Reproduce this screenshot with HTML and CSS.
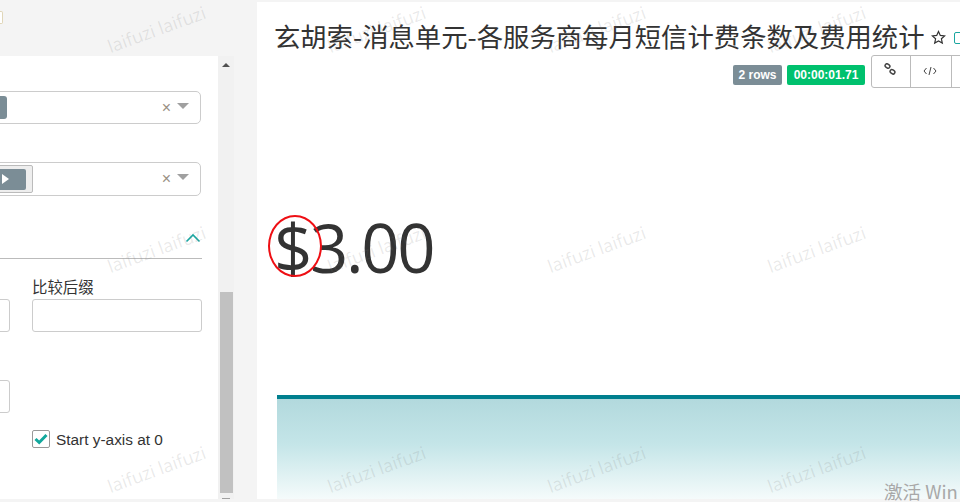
FILE: index.html
```html
<!DOCTYPE html>
<html lang="zh">
<head>
<meta charset="utf-8">
<title>玄胡索-消息单元</title>
<link rel="stylesheet" href="styles.css">
</head>
<body>
<div class="page">
  <aside class="side">
    <div class="side-top"><span class="tiny-box"></span></div>
    <div class="side-body">
      <div class="panel">
        <div class="select select-one">
          <span class="pill"></span>
          <span class="clear">×</span>
          <span class="caret"></span>
        </div>
        <div class="select select-two">
          <span class="tag"><span class="tag-btn"><span class="play"></span></span></span>
          <span class="clear">×</span>
          <span class="caret"></span>
        </div>
        <div class="section-head">
          <svg class="chev" width="16" height="10" viewBox="0 0 16 10"><path d="M1.500 8.500 8 2l6.500 6.500" fill="none" stroke="#1aa6a0" stroke-width="1.600"/></svg>
        </div>
        <div class="row row-labels">
          <div class="field-left"><input class="input" type="text"></div>
          <div class="field-right">
            <label class="label">比较后缀</label>
            <input class="input" type="text">
          </div>
        </div>
        <div class="row row-axis">
          <div class="field-left"><input class="input" type="text"></div>
          <div class="field-right check-field">
            <span class="check">
              <svg width="14" height="12" viewBox="0 0 14 12"><path d="M1.500 6 5.200 9.500 12.500 2" fill="none" stroke="#12a89d" stroke-width="3"/></svg>
            </span>
            <span class="check-text">Start y-axis at 0</span>
          </div>
        </div>
      </div>
      <div class="scrollbar">
        <span class="arrow-up"></span>
        <span class="thumb"></span>
        <span class="arrow-down"></span>
      </div>
    </div>
  </aside>

  <main class="main">
    <div class="title-row">
      <h1 class="title">玄胡索-消息单元-各服务商每月短信计费条数及费用统计</h1>
      <svg class="star" width="15" height="15" viewBox="0 0 15 15"><path d="M7.500 1.500 9.300 5.400 13.600 5.900 10.400 8.800 11.300 13 7.500 10.900 3.700 13 4.600 8.800 1.400 5.900 5.700 5.400Z" fill="none" stroke="#333" stroke-width="1.200"/></svg>
      <span class="cert"></span>
    </div>
    <div class="meta-row">
      <span class="badge badge-grey">2 rows</span>
      <span class="badge badge-green">00:00:01.71</span>
      <div class="btn-group">
        <span class="btn btn-a">
          <svg class="link-icon" width="12" height="12" viewBox="0 0 12 12"><g fill="none" stroke="#444" stroke-width="1.500"><rect x="1" y="1.200" width="5" height="3.600" rx="1.800" transform="rotate(35 3.500 3)"/><rect x="6" y="7" width="5" height="3.600" rx="1.800" transform="rotate(35 8.500 8.800)"/></g></svg>
        </span>
        <span class="btn btn-b">
          <svg class="code-icon" width="14" height="10" viewBox="0 0 14 10"><path d="M3.500 2 1 5l2.500 3M10.500 2 13 5l-2.500 3M8 1 6 9" fill="none" stroke="#444" stroke-width="1"/></svg>
        </span>
        <span class="btn btn-c"></span>
      </div>
    </div>
    <div class="big-wrap">
      <span class="big-number">$3.00</span>
      <span class="ring"></span>
    </div>
    <div class="chart"></div>
  </main>
</div>

<div class="watermarks">
  <span>laifuzi laifuzi</span><span>laifuzi laifuzi</span><span>laifuzi laifuzi</span><span>laifuzi laifuzi</span>
  <span>laifuzi laifuzi</span><span>laifuzi laifuzi</span><span>laifuzi laifuzi</span><span>laifuzi laifuzi</span>
  <span>laifuzi laifuzi</span><span>laifuzi laifuzi</span><span>laifuzi laifuzi</span><span>laifuzi laifuzi</span>
</div>
<div class="activate">激活 Win</div>
</body>
</html>
```
FILE: styles.css
```css
* { box-sizing: border-box; }
html, body { margin: 0; height: 100%; }
body {
  width: 960px;
  height: 502px;
  overflow: hidden;
  position: relative;
  background: #f4f4f4;
  font-family: "Liberation Sans", "Noto Sans CJK SC", sans-serif;
  color: #333;
}
.page { display: flex; height: 499px; }

.side { width: 257px; flex: none; display: flex; flex-direction: column; }
.side-top { height: 56px; padding-top: 11px; overflow: hidden; }
.tiny-box {
  display: block;
  width: 3px;
  height: 13px;
  border: 1px solid #e0d6b8;
  border-left: 0;
  border-radius: 0 2px 2px 0;
  background: #fff;
}
.side-body { flex: 1; display: flex; width: 234px; min-height: 0; }
.panel { width: 218px; background: #fff; overflow: hidden; padding: 35px 16px 0 0; }

.select {
  position: relative;
  display: flex;
  align-items: center;
  height: 33px;
  margin-left: -40px;
  width: 241px;
  border: 1px solid #ccc;
  border-radius: 5px;
  background: #fff;
}
.select-two { height: 34px; margin-top: 38px; }
.pill { width: 46px; height: 23px; border-radius: 0 3px 3px 0; background: #7b8d96; }
.tag {
  display: flex;
  align-items: center;
  justify-content: flex-end;
  width: 72px;
  height: 28px;
  padding-right: 6px;
  border: 1px solid #bbb;
  border-radius: 2px;
  background: #eee;
}
.tag-btn {
  display: flex;
  align-items: center;
  justify-content: flex-end;
  width: 66px;
  height: 21px;
  padding-right: 17px;
  border-radius: 2px;
  background: #7b8d96;
}
.play {
  border-left: 7px solid #fff;
  border-top: 5.500px solid transparent;
  border-bottom: 5.500px solid transparent;
}
.clear {
  position: absolute;
  right: 29px;
  top: 50%;
  margin-top: -9px;
  font-size: 16px;
  line-height: 18px;
  color: #9a8f84;
}
.caret {
  position: absolute;
  right: 11px;
  top: 11px;
  border-top: 6px solid #a0a0a0;
  border-left: 6px solid transparent;
  border-right: 6px solid transparent;
}

.section-head {
  display: flex;
  justify-content: flex-end;
  align-items: center;
  height: 34px;
  margin-top: 29px;
  border-bottom: 1px solid #bbb;
}
.chev { margin: 0 1px 8px 0; }

.row { display: flex; }
.row-labels { margin-top: 20px; height: 53px; }
.row-axis { margin-top: 48px; height: 68px; }
.field-left { width: 10px; flex: none; display: flex; align-items: flex-end; }
.field-left .input { margin-left: -60px; width: 70px; flex: none; }
.field-right { width: 170px; margin-left: 22px; flex: none; }
.label { display: block; height: 20px; font-size: 15.400px; line-height: 17px; color: #333; }
.input {
  display: block;
  width: 170px;
  height: 33px;
  margin: 0;
  padding: 0 8px;
  border: 1px solid #ccc;
  border-radius: 3px;
  background: #fff;
}
.row-axis .field-left { align-items: flex-start; }
.check-field { display: flex; align-items: flex-end; gap: 6px; height: 68px; }
.check {
  display: flex;
  align-items: center;
  justify-content: center;
  width: 18px;
  height: 18px;
  border: 1px solid #999;
  border-radius: 2px;
  background: #fff;
}
.check-text { margin-bottom: -1px; font-size: 15.400px; line-height: 19px; color: #333; }

.scrollbar {
  position: relative;
  width: 16px;
  flex: none;
  background: #f1f1f1;
}
.arrow-up {
  position: absolute;
  top: 7px;
  left: 4px;
  border-bottom: 4px solid #505050;
  border-left: 4px solid transparent;
  border-right: 4px solid transparent;
}
.thumb {
  position: absolute;
  top: 236px;
  left: 2px;
  width: 13px;
  height: 201px;
  background: #c1c1c1;
}
.arrow-down {
  position: absolute;
  bottom: 0;
  left: 4px;
  width: 8px;
  height: 1px;
  background: #a0a0a0;
}

.main {
  flex: 1;
  min-width: 0;
  margin-top: 2px;
  background: #fff;
  overflow: hidden;
  display: flex;
  flex-direction: column;
}
.title-row { display: flex; align-items: center; height: 53px; padding: 14px 0 0 17px; white-space: nowrap; }
.title { margin: 0; font-size: 26.350px; font-weight: 400; line-height: 36px; color: #333; font-family: "Noto Sans CJK SC", "Liberation Sans", sans-serif; flex: none; }
.star { flex: none; margin: 4px 0 0 6px; }
.cert { flex: none; width: 10px; height: 12px; margin: 4px 0 0 8px; border: 1px solid #1aa6a0; border-radius: 2px; }

.meta-row { display: flex; align-items: flex-start; height: 33px; padding-left: 476px; white-space: nowrap; }
.badge {
  flex: none;
  display: block;
  height: 20px;
  margin-top: 10px;
  border-radius: 2px;
  color: #fff;
  font-size: 12px;
  font-weight: 700;
  line-height: 20px;
  text-align: center;
}
.badge-grey { width: 49px; background: #7b8d96; }
.badge-green { width: 78px; margin-left: 5px; background: #00c16e; }
.btn-group {
  flex: none;
  display: flex;
  width: 120px;
  height: 33px;
  margin-left: 6px;
  border: 1px solid #bbb;
  border-radius: 3px;
  background: #fff;
}
.btn { display: flex; align-items: center; justify-content: center; height: 31px; flex: none; }
.btn-a { width: 39px; border-right: 1px solid #bbb; }
.btn-b { width: 41px; border-right: 1px solid #bbb; }
.btn-c { width: 38px; }
.link-icon { margin: 0 3px 5px 0; }
.code-icon { margin: 0 3px 1px 0; }

.big-wrap { position: relative; padding: 130px 0 119px 17px; }
.big-number {
  display: block;
  font-family: "Open Sans", "Noto Sans", sans-serif;
  font-size: 67px;
  font-weight: 500;
  letter-spacing: -2.300px;
  line-height: 58px;
  color: #333;
  white-space: nowrap;
}
.ring {
  position: absolute;
  left: 11px;
  top: 127px;
  width: 54px;
  height: 62px;
  border: 2px solid #ee0f14;
  border-radius: 50%;
}
.chart {
  flex: 1;
  margin-left: 20px;
  border-top: 4px solid #007f8e;
  background: linear-gradient(#b2d9dd, #c4e5e8 45%, #f5fbfb);
}

.watermarks {
  position: absolute;
  left: 47px;
  top: 4px;
  display: grid;
  grid-template-columns: repeat(4, 220px);
  grid-template-rows: 220px 220px 50px;
  pointer-events: none;
}
.watermarks span {
  justify-self: center;
  align-self: start;
  height: 24px;
  margin-top: 13px;
  color: rgba(120, 120, 120, 0.16);
  font-family: "Open Sans", sans-serif;
  font-size: 18px;
  line-height: 24px;
  white-space: nowrap;
  transform: rotate(-20deg);
}
.activate {
  position: absolute;
  left: 884px;
  top: 480px;
  font-family: "Noto Sans CJK SC", "Open Sans", sans-serif;
  font-size: 18.500px;
  line-height: 22px;
  color: #a8a8a8;
  white-space: nowrap;
}
```
